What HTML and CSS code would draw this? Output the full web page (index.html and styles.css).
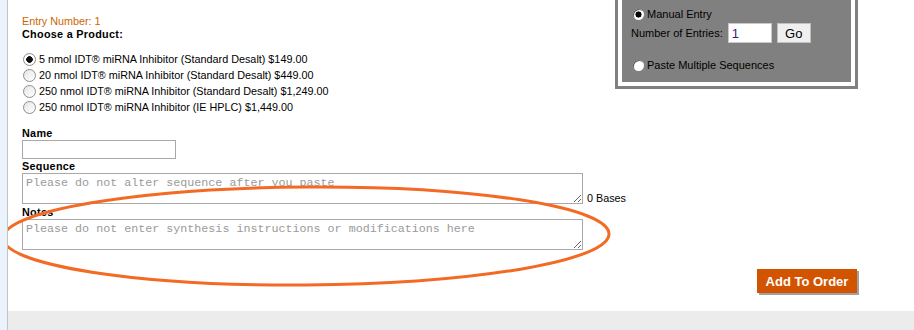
FILE: index.html
```html
<!DOCTYPE html>
<html lang="en">
<head>
    <meta charset="UTF-8">
    <title>Order Entry</title>
    <link rel="stylesheet" href="styles.css">
</head>
<body>

    <div class="page">
        <div class="content">

            <!-- Main entry form -->
            <div class="order-form">
                <div class="entry-number">Entry Number: 1</div>
                <div class="field-label">Choose a Product:</div>

                <ul class="products">
                    <li><label><input type="radio" name="product" class="product-radio" checked> 5 nmol IDT&reg; miRNA Inhibitor (Standard Desalt) $149.00</label></li>
                    <li><label><input type="radio" name="product" class="product-radio"> 20 nmol IDT&reg; miRNA Inhibitor (Standard Desalt) $449.00</label></li>
                    <li><label><input type="radio" name="product" class="product-radio"> 250 nmol IDT&reg; miRNA Inhibitor (Standard Desalt) $1,249.00</label></li>
                    <li><label><input type="radio" name="product" class="product-radio"> 250 nmol IDT&reg; miRNA Inhibitor (IE HPLC) $1,449.00</label></li>
                </ul>

                <div class="field-label name-label">Name</div>
                <input type="text" class="name-input">

                <div class="field-label">Sequence</div>
                <div class="sequence-row">
                    <textarea class="seq-box" placeholder="Please do not alter sequence after you paste"></textarea>
                    <span class="base-count">0 Bases</span>
                </div>

                <div class="field-label notes-label">Notes</div>
                <textarea class="seq-box" placeholder="Please do not enter synthesis instructions or modifications here"></textarea>
            </div>

            <!-- Entry mode box (top right) -->
            <div class="entry-mode">
                <div class="entry-mode-inner">
                    <label class="mode-option"><input type="radio" name="mode" class="mode-radio" checked> Manual Entry</label>
                    <div class="entries-row">
                        Number of Entries:
                        <input type="text" class="entries-input" value="1">
                        <button class="go-btn">Go</button>
                    </div>
                    <label class="mode-option"><input type="radio" name="mode" class="mode-radio"> Paste Multiple Sequences</label>
                </div>
            </div>
        </div>

        <div class="actions">
            <button class="add-btn">Add To Order</button>
        </div>

        <div class="footer-band"></div>

        <!-- Highlight circled round the notes box -->
        <svg class="highlight" width="914" height="330" viewBox="0 0 914 330">
            <ellipse cx="306" cy="236" rx="303" ry="49" fill="none" stroke="#f26a24" stroke-width="3" transform="rotate(-0.4 306 236)"/>
        </svg>
    </div>

</body>
</html>
```

FILE: styles.css
```css
body {
    margin: 0;
    padding: 0;
    font-family: Tahoma, "Liberation Sans", Arial, sans-serif;
    font-size: 10.8px;
    color: #000;
    background-color: #eaf3fb;
}

.page {
    position: relative;
    margin-left: 7px;
    border-left: 1px solid #c4c4c4;
    background-color: #fff;
    height: 330px;
    overflow: hidden;
}

.content {
    display: flex;
    justify-content: space-between;
    padding: 14px 56px 0 14px;
}

.order-form {
    flex: 1;
    min-width: 0;
}

.entry-number {
    color: #cc6600;
    line-height: 14px;
}

.field-label {
    font-weight: bold;
    line-height: 13px;
    letter-spacing: 0.3px;
}

.products {
    list-style: none;
    margin: 10px 0 0 0;
    padding: 0;
}

.products li {
    line-height: 16px;
    height: 16px;
    white-space: nowrap;
}

/* classic grey radio with black dot */
.product-radio {
    appearance: none;
    -webkit-appearance: none;
    width: 13px;
    height: 13px;
    margin: 0 0 0 1px;
    box-sizing: border-box;
    border: 1px solid #8d8d8d;
    border-radius: 50%;
    background: linear-gradient(135deg, #e6e6e6, #ffffff);
    vertical-align: -3px;
}

.product-radio:checked {
    background: radial-gradient(circle, #111 0 3px, #fff 3.6px);
}

.name-label {
    margin-top: 12px;
}

.name-input {
    display: block;
    width: 154px;
    height: 19px;
    box-sizing: border-box;
    border: 1px solid #a9a9a9;
    margin: 0 0 1px 0;
}

.sequence-row {
    display: flex;
    align-items: flex-end;
    gap: 4px;
    white-space: nowrap;
}

.seq-box {
    display: block;
    flex-shrink: 0;
    width: 561px;
    height: 31px;
    box-sizing: border-box;
    border: 1px solid #a9a9a9;
    margin: 0;
    padding: 2px 3px;
    font-family: "Liberation Mono", "Courier New", monospace;
    font-size: 11.7px;
}

.seq-box::placeholder {
    color: #9a9a9a;
}

.base-count {
    line-height: 13px;
    margin-bottom: -1px;
}

.notes-label {
    margin-top: 2px;
}

/* Entry mode box */
.entry-mode {
    flex-shrink: 0;
    margin-top: -52px;
    width: 243px;
    height: 127px;
    box-sizing: border-box;
    border: 3px solid #808080;
    padding: 4px;
    background-color: #fff;
    align-self: flex-start;
}

.entry-mode-inner {
    background-color: #808080;
    height: 100%;
    padding: 38px 0 0 9px;
    box-sizing: border-box;
    font-size: 11px;
}

.mode-option {
    display: flex;
    align-items: center;
    gap: 3px;
    line-height: 15px;
    margin-left: 2px;
}

.mode-radio {
    appearance: none;
    -webkit-appearance: none;
    width: 11px;
    height: 11px;
    margin: 0;
    border-radius: 50%;
    background: #fff;
    box-shadow: 1px 1px 0 #5a5a5a inset;
}

.mode-radio:checked {
    background: radial-gradient(circle, #000 0 2.8px, #fff 3.3px);
}

.entries-row {
    display: flex;
    align-items: center;
    margin: 1px 0 15px 0;
}

.entries-input {
    width: 44px;
    height: 20px;
    box-sizing: border-box;
    border: 1px solid #c8c8c8;
    margin: 0 5px 0 5px;
    padding: 1px 3px;
    font-family: Tahoma, "Liberation Sans", sans-serif;
    font-size: 13px;
    color: #3a1a7a;
}

.go-btn {
    width: 34px;
    height: 20px;
    padding: 0;
    border: 1px solid #c0c0c0;
    background-color: #efefef;
    font-family: Tahoma, "Liberation Sans", sans-serif;
    font-size: 13px;
    color: #000;
}

/* Add to order */
.actions {
    display: flex;
    justify-content: flex-end;
    padding: 19px 57px 0 0;
}

.add-btn {
    width: 100px;
    height: 24px;
    padding: 0;
    border: none;
    background-color: #d35400;
    box-shadow: 2px 2px 0 #a0a0a0;
    color: #fff;
    font-family: "Liberation Sans", Arial, sans-serif;
    font-weight: bold;
    font-size: 13px;
}

.footer-band {
    position: absolute;
    left: 0;
    right: 0;
    bottom: 0;
    height: 19px;
    background-color: #ececec;
}

.highlight {
    position: absolute;
    top: 0;
    left: -8px;
    pointer-events: none;
}
```
